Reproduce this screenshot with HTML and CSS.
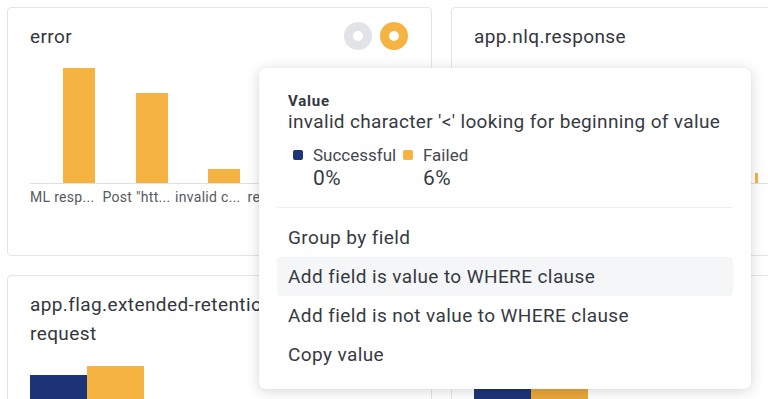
FILE: index.html
```html
<!DOCTYPE html>
<html>
<head>
<meta charset="utf-8">
<link rel="stylesheet" href="styles.css">
</head>
<body>
<div class="page">
  <div class="grid">
    <div class="card">
      <div class="card-head">
        <div class="title">error</div>
        <div class="toggles">
          <span class="ring ring-gray"></span>
          <span class="ring ring-orange"></span>
        </div>
      </div>
      <div class="chart">
        <div class="slot"><div class="bar orange" style="height:115px"></div></div>
        <div class="slot"><div class="bar orange" style="height:90px"></div></div>
        <div class="slot"><div class="bar orange" style="height:14px"></div></div>
        <div class="slot"></div>
        <div class="slot"></div>
      </div>
      <div class="labels">
        <span class="lbl">ML resp...</span>
        <span class="lbl">Post "htt...</span>
        <span class="lbl">invalid c...</span>
        <span class="lbl">re</span>
      </div>
    </div>
    <div class="card">
      <div class="card-head">
        <div class="title">app.nlq.response</div>
      </div>
      <div class="chart chart-right">
        <div class="thin-bar"></div>
      </div>
    </div>
    <div class="card">
      <div class="card-head">
        <div class="title title-narrow">app.flag.extended-retention-request</div>
      </div>
      <div class="pair pair-left">
        <div class="pbar navy" style="height:40px;margin-top:9px"></div>
        <div class="pbar orange" style="height:49px"></div>
      </div>
    </div>
    <div class="card">
      <div class="card-head">
        <div class="title">&nbsp;</div>
      </div>
      <div class="pair pair-low">
        <div class="pbar navy" style="height:20px"></div>
        <div class="pbar orange2" style="height:20px"></div>
      </div>
    </div>
  </div>

  <div class="popup">
    <div class="pop-head">
      <div class="pop-label">Value</div>
      <div class="pop-value">invalid character '&lt;' looking for beginning of value</div>
      <div class="legend">
        <div class="leg-col leg-first">
          <div class="leg-row"><span class="swatch navy"></span><span class="leg-name">Successful</span></div>
          <div class="leg-pct">0%</div>
        </div>
        <div class="leg-col">
          <div class="leg-row"><span class="swatch orange"></span><span class="leg-name">Failed</span></div>
          <div class="leg-pct">6%</div>
        </div>
      </div>
    </div>
    <div class="divider"></div>
    <div class="menu">
      <div class="item">Group by field</div>
      <div class="item item-active">Add field is value to WHERE clause</div>
      <div class="item">Add field is not value to WHERE clause</div>
      <div class="item">Copy value</div>
    </div>
  </div>
</div>
</body>
</html>
```

FILE: styles.css
```css
html, body {
  margin: 0;
  padding: 0;
  background: #ffffff;
  overflow: hidden;
  width: 768px;
  height: 399px;
}
body {
  font-family: Roboto, "Liberation Sans", sans-serif;
  color: #353a42;
}
.page {
  position: relative;
  width: 768px;
  height: 399px;
  overflow: hidden;
}
.grid {
  display: grid;
  grid-template-columns: 425px 425px;
  grid-template-rows: 249px 249px;
  gap: 19px;
  padding: 7px;
}
.card {
  border: 1px solid #e4e5e9;
  border-radius: 4px;
  background: #fff;
  padding: 14px 23px 0 22px;
  box-sizing: border-box;
  overflow: hidden;
}
.card-head {
  display: flex;
  justify-content: space-between;
  align-items: flex-start;
}
.title {
  font-size: 19px;
  letter-spacing: 0.4px;
  line-height: 29px;
  color: #33373d;
}
.title-narrow {
  width: 300px;
}
.toggles {
  display: flex;
  gap: 8px;
}
.ring {
  width: 10px;
  height: 10px;
  border-radius: 50%;
  border: 9px solid #e2e3e6;
  background: #fff;
  display: block;
}
.ring-orange {
  border-color: #f5b342;
}
.chart {
  display: flex;
  align-items: flex-end;
  height: 130px;
  border-bottom: 1px solid #dedfe3;
  margin-top: 2px;
}
.slot {
  width: 72.5px;
  height: 100%;
  display: flex;
  align-items: flex-end;
}
.bar {
  width: 32px;
  margin-left: 33px;
}
.orange { background: #f5b342; }
.orange2 { background: #e9a73a; }
.navy { background: #1d3577; }
.labels {
  display: flex;
  margin-top: 5px;
}
.lbl {
  width: 72.5px;
  font-size: 14px;
  letter-spacing: 0.3px;
  color: #555a61;
  white-space: nowrap;
}
.thin-bar {
  width: 3px;
  height: 10px;
  margin-left: 281px;
  background: #f5b342;
}
.pair {
  display: flex;
  align-items: flex-start;
}
.pair-left {
  margin-top: 18px;
}
.pair-low {
  margin-top: 66px;
}
.pbar {
  width: 57px;
}
.popup {
  position: absolute;
  left: 259px;
  top: 68px;
  width: 492px;
  height: 321px;
  box-sizing: border-box;
  background: #fff;
  border-radius: 6px;
  box-shadow: 0 2px 14px rgba(0, 0, 0, 0.16), 0 0 1px rgba(0, 0, 0, 0.12);
  padding: 24px 18px 14px 18px;
}
.pop-head {
  padding: 0 11px;
}
.pop-label {
  font-size: 15px;
  font-weight: 700;
  letter-spacing: 0.8px;
  line-height: 18px;
  color: #33373d;
}
.pop-value {
  font-size: 19px;
  letter-spacing: 0.35px;
  line-height: 24px;
  white-space: nowrap;
  color: #353a42;
}
.legend {
  display: flex;
  margin-top: 12px;
  padding-left: 5px;
}
.leg-col {
  display: flex;
  flex-direction: column;
}
.leg-first {
  width: 110px;
}
.leg-row {
  display: flex;
  align-items: center;
  gap: 10px;
  height: 18px;
}
.swatch {
  width: 10px;
  height: 10px;
  border-radius: 2px;
  display: block;
}
.leg-name {
  font-size: 17px;
  color: #44484f;
}
.leg-pct {
  font-size: 21px;
  letter-spacing: 0.5px;
  line-height: 24px;
  padding-left: 20px;
  margin-top: 2px;
  color: #353a42;
}
.divider {
  height: 1px;
  background: #eceef1;
  margin-top: 17px;
}
.menu {
  margin-top: 10px;
  display: flex;
  flex-direction: column;
}
.item {
  height: 39px;
  line-height: 39px;
  font-size: 19px;
  letter-spacing: 0.4px;
  padding-left: 11px;
  border-radius: 4px;
  color: #353a42;
}
.item-active {
  background: #f5f6f8;
}
```
